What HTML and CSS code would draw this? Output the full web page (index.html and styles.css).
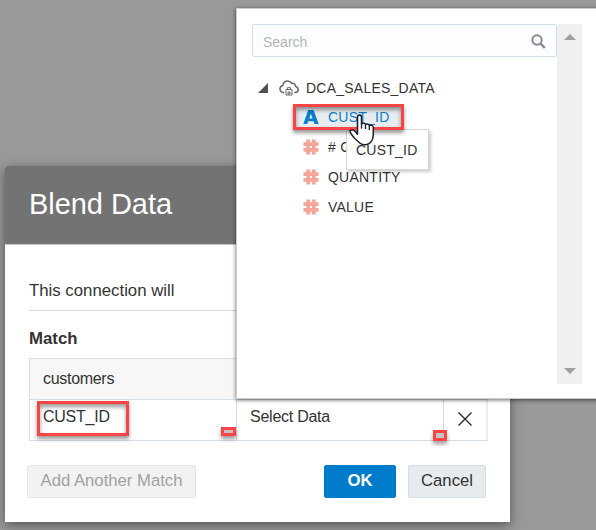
FILE: index.html
```html
<!DOCTYPE html>
<html lang="en">
<head>
<meta charset="utf-8">
<title>Blend Data</title>
<link rel="stylesheet" href="styles.css">
</head>
<body>
<main class="dialog">
  <header class="dialog-header"><h1>Blend Data</h1></header>
  <div class="dialog-body">
    <p class="intro">This connection will</p>
    <h2>Match</h2>
    <div class="match-table">
      <div class="match-head">customers</div>
      <div class="match-row">
        <div class="cell source">CUST_ID<span class="mark mark-field"></span><span class="mark mark-left"></span></div>
        <div class="cell target">Select Data<span class="mark mark-right"></span></div>
        <div class="cell remove"><svg width="14" height="14" viewBox="0 0 14 14"><path d="M.5.5l13 13M13.5.5l-13 13" stroke="#222" stroke-width="1.25" fill="none"/></svg></div>
      </div>
    </div>
    <footer class="actions">
      <button class="btn add" disabled>Add Another Match</button>
      <button class="btn ok">OK</button>
      <button class="btn cancel">Cancel</button>
    </footer>
  </div>
</main>

<section class="picker">
  <div class="picker-main">
    <div class="search"><span>Search</span>
      <svg width="15" height="15" viewBox="0 0 15 15" fill="none" stroke="#84898d"><circle cx="6" cy="6" r="4.7" stroke-width="1.9"/><path d="M9.500 9.500l4.300 4.300" stroke-width="2.400"/></svg>
    </div>
    <div class="tree">
      <div class="node root">
        <svg class="caret" width="10" height="10" viewBox="0 0 10 10"><path d="M10 0v10H0z" fill="#4d5155"/></svg>
        <svg class="cloud" width="20" height="16" viewBox="0 0 20 16" fill="none" stroke="#66696c"><path d="M5.200 12.600H4.400A3.600 3.600 0 0 1 3.800 5.500C4.200 2.700 6.200 1 8.600 1c2 0 3.300.9 4.100 2.400 2-.4 3.700.9 3.800 2.800 1.600.5 2.700 1.700 2.700 3.300 0 1.900-1.300 3.100-3.200 3.100h-.8" stroke-width="1.500"/><path d="M7 9.500h6v5.500H7zM8.500 9V7.600h3V9M9 12h2v2H9z" stroke-width="1"/></svg>
        <span>DCA_SALES_DATA</span>
      </div>
      <div class="node leaf selected">
        <svg width="16" height="16" viewBox="0 0 16 16"><path fill="#0b7fc9" fill-rule="evenodd" d="M5.200 1h5.400L15.700 15h-4.200l-.9-2.800H5.100L4.300 15H.3zM7.900 4.800L6.300 9.500h3.200z"/></svg>
        <span>CUST_ID</span><i class="mark mark-node"></i>
      </div>
      <div class="node leaf">
        <svg width="16" height="16" viewBox="0 0 16 16"><path d="M5.200.5v15M10.800.5v15M.5 5.200h15M.5 10.800h15" stroke="#f4a499" stroke-width="3.700"/></svg>
        <span># Customers</span>
      </div>
      <div class="node leaf">
        <svg width="16" height="16" viewBox="0 0 16 16"><path d="M5.200.5v15M10.800.5v15M.5 5.200h15M.5 10.800h15" stroke="#f4a499" stroke-width="3.700"/></svg>
        <span>QUANTITY</span>
      </div>
      <div class="node leaf">
        <svg width="16" height="16" viewBox="0 0 16 16"><path d="M5.200.5v15M10.800.5v15M.5 5.200h15M.5 10.800h15" stroke="#f4a499" stroke-width="3.700"/></svg>
        <span>VALUE</span>
      </div>
    </div>
  </div>
  <div class="scrollbar"><i class="arrow up"></i><i class="arrow down"></i></div>
</section>
<svg class="cursor" width="27" height="34" viewBox="0 0 27 34"><path d="M8.500 17.500V3.200C8.500.2 12.500.2 12.500 3.200V10c.9-1.500 3.600-1.200 4 .6 1.100-1.300 3.500-.7 3.800 1 1.600-1.100 4-.1 4 2v7.200c0 3.500-.8 5.400-2.600 7.500-2.200 2.600-7.400 3.600-10.600.9L5.200 24C3.600 21.800 1 19 .9 16.800c1.800-1.500 4.500-.8 5.600 1l2 2.400z" fill="#fff" stroke="#1b1b2b" stroke-width="1.500" stroke-linejoin="round"/><path d="M12.500 9.500v5M16.500 11v4M20.300 12v4" stroke="#1b1b2b" stroke-width="1.300"/></svg>
<div class="tooltip">CUST_ID</div>
</body>
</html>
```

FILE: styles.css
```css
* { box-sizing: border-box; }
body {
  margin: 0;
  width: 596px;
  height: 530px;
  overflow: hidden;
  position: relative;
  background: #999;
  color: #333;
  font: 16px/20px "Liberation Sans", Arial, sans-serif;
}
svg { display: block; flex: none; }
h1, h2, p { margin: 0; }

.dialog {
  width: 505px;
  height: 356px;
  margin: 0 0 0 5px;
  position: relative;
  top: 166px;
  background: #fff;
  border-radius: 2px 2px 0 0;
  box-shadow: 0 3px 12px rgba(0, 0, 0, .45);
}
.dialog-header {
  height: 79px;
  padding: 20px 24px;
  background: #737373;
  border-bottom: 1px solid #c4c4c4;
  border-radius: 2px 2px 0 0;
}
h1 { color: #fff; font-size: 29px; line-height: 36px; font-weight: 400; letter-spacing: -.05px; }
.dialog-body { padding: 36px 22px 0 24px; }
.intro { height: 30px; border-bottom: 1px solid #d6d6d6; font-size: 16.8px; }
h2 { margin: 18px 0 9px; font-size: 16.8px; line-height: 20px; }
.match-table { width: 459px; height: 83px; border: 1px solid #d6dfe6; }
.match-head {
  height: 41px;
  padding: 10px 13px;
  letter-spacing: -.3px;
  background: #f7f7f7;
  border-bottom: 1px solid #d6dfe6;
}
.match-row { display: grid; grid-template-columns: 207px 207px 1fr; height: 40px; }
.cell { position: relative; padding: 7px 13px; letter-spacing: -.25px; border-right: 1px solid #d5d9dd; }
.cell.remove { padding: 12px 14px; border-right: 2px solid #eee; }

.mark {
  position: absolute;
  border: 3px solid #f84444;
  box-shadow: 0 3px 4px rgba(0, 0, 0, .4), inset 0 3px 4px rgba(0, 0, 0, .4);
}
.mark-field { left: 7px; top: 1px; width: 92px; height: 35px; }
.mark-left, .mark-right { background: #c4c4c4; box-shadow: 0 3px 4px rgba(0, 0, 0, .4); }
.mark-left { left: 191px; top: 27px; width: 15px; height: 9px; }
.mark-right { left: 196px; top: 30px; width: 14px; height: 11px; }
.mark-node { left: 41px; top: 1px; width: 111px; height: 26px; }

.actions { display: flex; width: 459px; margin: 24px 0 0 -2px; }
.btn {
  height: 33px;
  padding: 0 0 2px;
  font: inherit;
  font-size: 16.7px;
  border: 1px solid #d3dfe7;
  border-radius: 2px;
}
.btn.add { width: 169px; color: #a1a1a1; background: #f2f2f2; border-color: #e7e7e7; }
.btn.ok { width: 72px; margin-left: 128px; color: #fff; background: #007ccb; border-color: #007ccb; font-weight: 700; }
.btn.cancel { width: 78px; margin-left: 12px; color: #333; background: #e7ebee; }

.picker {
  position: absolute;
  left: 236px;
  top: 8px;
  width: 370px;
  height: 391px;
  padding: 15px 0 0 15px;
  display: flex;
  background: #fff;
  border: 1px solid #ccc;
  box-shadow: 0 1px 4px rgba(0, 0, 0, .6);
}
.picker-main { width: 305px; font-size: 14px; }
.search {
  display: flex;
  justify-content: space-between;
  align-items: center;
  height: 33px;
  padding: 2px 10px 0;
  color: #b5b5b5;
  background: #fbfdff;
  border: 1px solid #d0dfe9;
  border-radius: 2px;
}
.tree { margin-top: 16px; }
.node { position: relative; display: flex; align-items: center; height: 30px; letter-spacing: .23px; }
.node.root { padding-left: 6px; }
.caret { margin-right: 11px; }
.cloud { margin-right: 7px; }
.leaf { padding: 0 0 2px 51px; gap: 9px; }
.selected { color: #0b7fc9; }
.selected::before {
  content: "";
  position: absolute;
  left: 44px;
  top: 4px;
  width: 105px;
  height: 20px;
  background: #e6ecf0;
}
.selected > * { z-index: 1; }
.scrollbar {
  display: flex;
  flex-direction: column;
  justify-content: space-between;
  align-items: center;
  width: 25px;
  height: 360px;
  padding: 10px 0;
  background: #f0f0f0;
}
.arrow { border: 6px solid transparent; }
.up { border-top: 0; border-bottom-color: #a0a0a0; }
.down { border-bottom: 0; border-top-color: #a0a0a0; }
.tooltip {
  position: absolute;
  left: 346px;
  top: 129px;
  width: 83px;
  height: 41px;
  padding: 10px 9px;
  font-size: 14px;
  letter-spacing: .23px;
  background: rgba(255, 255, 255, .95);
  border: 1px solid #d8d8d8;
  box-shadow: 2px 2px 3px rgba(0, 0, 0, .2);
}
.cursor { position: absolute; left: 349px; top: 114px; z-index: 1; }
```
